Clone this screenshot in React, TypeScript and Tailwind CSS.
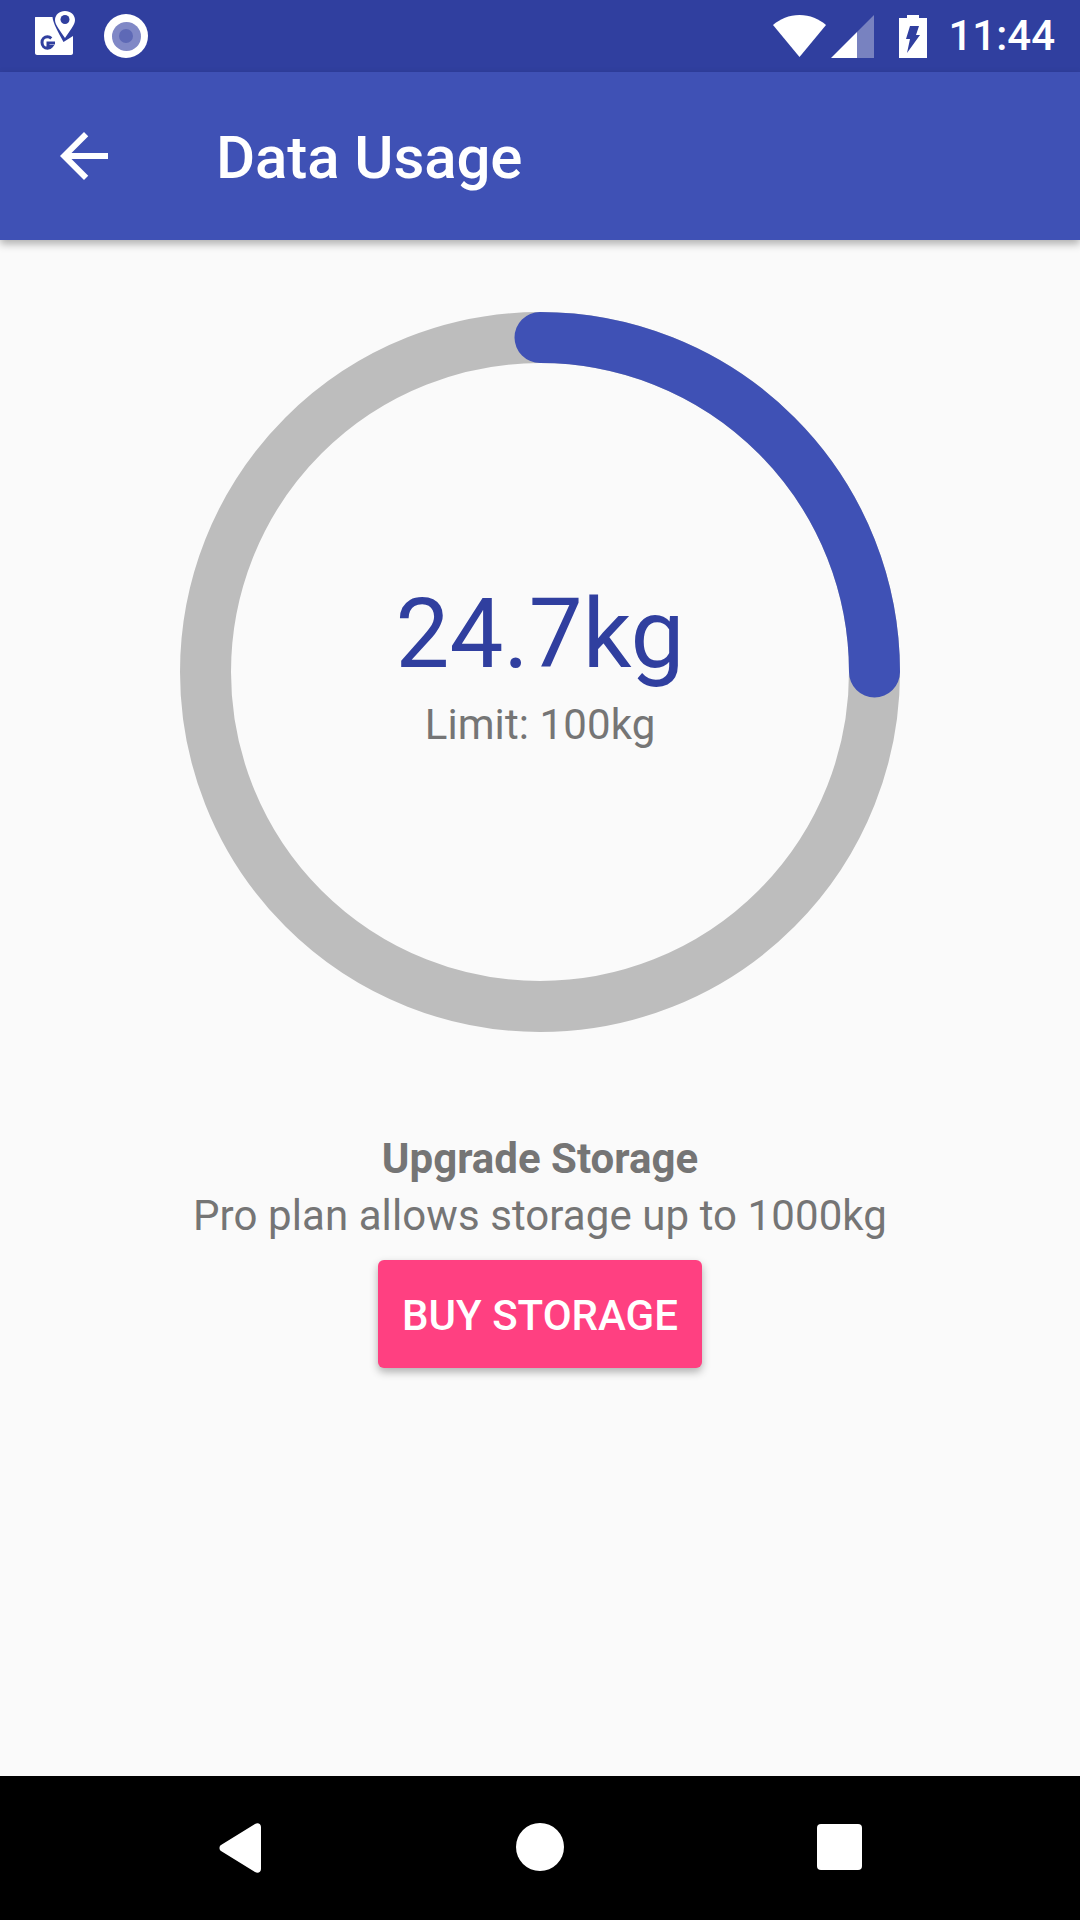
const StatusBar = () => (
  <div className="flex h-[72px] items-center bg-[#303F9F] pr-[25px] pl-[35px]">
    <svg width="40" height="44" viewBox="0 0 40 44" className="mt-[-6px] mr-[-2px]">
      <path d="M1 6H17.500C18 12 23 21 28.500 31L38 25V42C38 43 37 44 36 44H2C1 44 0 43 0 42V7C0 6 0 6 1 6Z" fill="#fff" />
      <path d="M30 0C35.500 0 40 3.800 40 9C40 14 34.500 20 30 27C25.500 20 20 14 20 9C20 3.800 24.500 0 30 0Z" fill="#fff" />
      <circle cx="30" cy="8.500" r="4.500" fill="#303F9F" />
      <path d="M20 32H13V35.500H16.500C15.800 36.500 14.500 37.200 12.500 37.200C9.500 37.200 7 34.800 7 31.500C7 28.200 9.500 25.800 12.500 25.800C14 25.800 15.200 26.300 16.300 27.300" fill="none" stroke="#303F9F" strokeWidth="3" />
    </svg>
    <div className="ml-[31px] flex h-[44px] w-[44px] items-center justify-center rounded-full bg-white">
      <div className="flex h-[29px] w-[29px] items-center justify-center rounded-full bg-[#8088C6]">
        <div className="h-[14px] w-[14px] rounded-full bg-[#5E69B6]" />
      </div>
    </div>
    <div className="ml-auto flex items-center">
      <svg width="53" height="42" viewBox="0 0 53 42">
        <path d="M0 10C7 4 16 0 26.500 0C37 0 46 4 53 10L26.500 42Z" fill="#fff" />
      </svg>
      <svg width="43" height="43" viewBox="0 0 43 43" className="ml-[5px]">
        <path d="M43 0V43H26V17Z" fill="#fff" fillOpacity="0.35" />
        <path d="M0 43L26 17V43Z" fill="#fff" />
      </svg>
      <svg width="28" height="43" viewBox="0 0 28 43" className="ml-[25px]">
        <path d="M8 0H20V3H28V43H0V3H8Z" fill="#fff" />
        <path d="M11 11H20L17 20H21L8 38L11 24H7Z" fill="#303F9F" />
      </svg>
      <span className="ml-[21px] text-[42px] leading-[72px] font-medium text-white">11:44</span>
    </div>
  </div>
);

const Toolbar = () => (
  <div className="relative flex h-[168px] items-center bg-[#3F51B5] pl-[48px] shadow-[0_4px_8px_rgba(0,0,0,0.3)]">
    <svg width="72" height="72" viewBox="0 0 24 24" fill="#fff">
      <path d="M20 11H7.830l5.590-5.590L12 4l-8 8 8 8 1.410-1.410L7.830 13H20v-2z" />
    </svg>
    <h1 className="mt-[4px] ml-[96px] text-[60px] font-medium tracking-[-0.1px] text-white">Data Usage</h1>
  </div>
);

const UsageRing = () => (
  <div className="relative h-[720px] w-[720px]">
    <svg width="720" height="720" viewBox="0 0 720 720" fill="none" strokeWidth="51">
      <circle cx="360" cy="360" r="334.500" stroke="#BDBDBD" />
      <path d="M360 25.500A334.500 334.500 0 0 1 694.500 360" stroke="#3F51B5" strokeLinecap="round" />
    </svg>
    <div className="absolute inset-0 flex flex-col items-center justify-center pb-[16px]">
      <span className="text-[96px] leading-[112px] text-[#303F9F]">24.7kg</span>
      <span className="mt-[10px] text-[42px] leading-[50px] tracking-[0.1px] text-[#757575]">Limit: 100kg</span>
    </div>
  </div>
);

const NavBar = () => (
  <div className="flex h-[144px] items-center bg-black">
    <div className="flex w-full justify-between pr-[218px] pl-[219px]">
      <svg width="42" height="50" viewBox="0 0 42 50">
        <path d="M2 22L36 1C39 -1 42 1 42 4V46C42 49 39 51 36 49L2 28C0 27 0 23 2 22Z" fill="#fff" />
      </svg>
      <div className="ml-[1px] h-[48px] w-[48px] rounded-full bg-white" />
      <div className="my-px h-[46px] w-[45px] rounded-[4px] bg-white" />
    </div>
  </div>
);

export default function App() {
  return (
    <div className="flex h-[1920px] w-[1080px] flex-col bg-[#FAFAFA] font-['Roboto',sans-serif]">
      <StatusBar />
      <Toolbar />
      <main className="flex flex-1 flex-col items-center pt-[72px]">
        <UsageRing />
        <h2 className="mt-[98px] text-[42px] leading-[57px] font-bold text-[#757575]">Upgrade Storage</h2>
        <p className="text-[42px] leading-[57px] tracking-[0.08px] text-[#757575]">Pro plan allows storage up to 1000kg</p>
        <button className="mt-[16px] h-[108px] w-[324px] rounded-[6px] bg-[#FF4081] pt-[2px] text-[42px] font-medium text-white shadow-[0_4px_8px_rgba(0,0,0,0.3)]">
          BUY STORAGE
        </button>
      </main>
      <NavBar />
    </div>
  );
}
